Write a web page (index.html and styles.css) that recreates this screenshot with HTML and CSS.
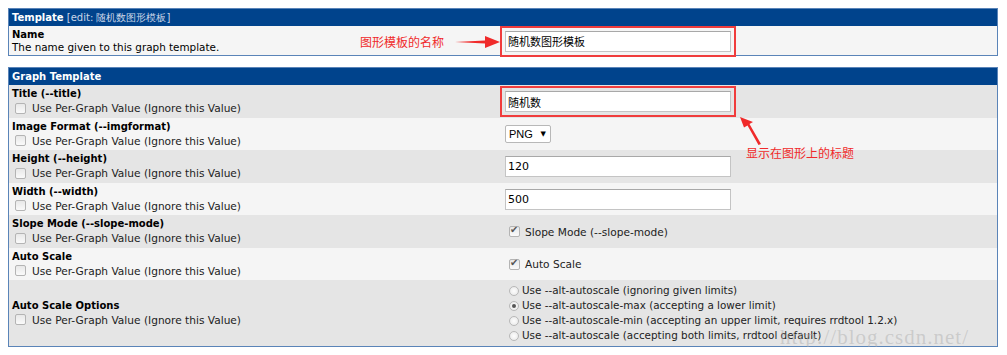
FILE: index.html
```html
<!DOCTYPE html>
<html lang="en">
  <head>
    <meta charset="UTF-8" />
    <title>Graph Templates</title>
    <link rel="stylesheet" href="styles.css">
  </head>
  <body>
    <div class="box">
      <div class="box-title"><b>Template</b> <span class="edit">[edit: 随机数图形模板]</span></div>
      <div class="row light">
        <div class="cell-left">
          <div class="label">Name</div>
          <div class="desc">The name given to this graph template.</div>
        </div>
        <div class="cell-right">
          <input type="text" class="text marked" value="随机数图形模板" />
        </div>
      </div>
      <div class="note note-name">图形模板的名称</div>
      <svg class="arrow arrow-name" width="46" height="14" viewBox="0 0 46 14">
        <path d="M0 7 L30 5.5 L30 1 L45 7 L30 13 L30 8.5 Z" fill="#f02a2a" />
      </svg>
    </div>

    <div class="box graph">
      <div class="box-title"><b>Graph Template</b></div>

      <div class="row dark">
        <div class="cell-left">
          <div class="label">Title (--title)</div>
          <label class="option"><input type="checkbox" class="check" /> Use Per-Graph Value (Ignore this Value)</label>
        </div>
        <div class="cell-right">
          <input type="text" class="text marked" value="随机数" />
        </div>
      </div>

      <div class="row light">
        <div class="cell-left">
          <div class="label">Image Format (--imgformat)</div>
          <label class="option"><input type="checkbox" class="check" /> Use Per-Graph Value (Ignore this Value)</label>
        </div>
        <div class="cell-right">
          <span class="select-wrap">
            <select class="select">
              <option>PNG</option>
              <option>GIF</option>
              <option>SVG</option>
            </select>
          </span>
        </div>
      </div>

      <div class="row dark">
        <div class="cell-left">
          <div class="label">Height (--height)</div>
          <label class="option"><input type="checkbox" class="check" /> Use Per-Graph Value (Ignore this Value)</label>
        </div>
        <div class="cell-right">
          <input type="text" class="text" value="120" />
        </div>
      </div>

      <div class="row light">
        <div class="cell-left">
          <div class="label">Width (--width)</div>
          <label class="option"><input type="checkbox" class="check" /> Use Per-Graph Value (Ignore this Value)</label>
        </div>
        <div class="cell-right">
          <input type="text" class="text" value="500" />
        </div>
      </div>

      <div class="row dark">
        <div class="cell-left">
          <div class="label">Slope Mode (--slope-mode)</div>
          <label class="option"><input type="checkbox" class="check" /> Use Per-Graph Value (Ignore this Value)</label>
        </div>
        <div class="cell-right">
          <label class="option right-option"><input type="checkbox" class="check" checked /> Slope Mode (--slope-mode)</label>
        </div>
      </div>

      <div class="row light">
        <div class="cell-left">
          <div class="label">Auto Scale</div>
          <label class="option"><input type="checkbox" class="check" /> Use Per-Graph Value (Ignore this Value)</label>
        </div>
        <div class="cell-right">
          <label class="option right-option"><input type="checkbox" class="check" checked /> Auto Scale</label>
        </div>
      </div>

      <div class="row dark tall">
        <div class="cell-left">
          <div class="label">Auto Scale Options</div>
          <label class="option"><input type="checkbox" class="check" /> Use Per-Graph Value (Ignore this Value)</label>
        </div>
        <div class="cell-right radios">
          <label class="radio-line"><input type="radio" name="autoscale" class="radio" /> Use --alt-autoscale (ignoring given limits)</label>
          <label class="radio-line"><input type="radio" name="autoscale" class="radio" checked /> Use --alt-autoscale-max (accepting a lower limit)</label>
          <label class="radio-line"><input type="radio" name="autoscale" class="radio" /> Use --alt-autoscale-min (accepting an upper limit, requires rrdtool 1.2.x)</label>
          <label class="radio-line"><input type="radio" name="autoscale" class="radio" /> Use --alt-autoscale (accepting both limits, rrdtool default)</label>
        </div>
      </div>

      <svg class="arrow arrow-title" width="24" height="30" viewBox="0 0 24 30">
        <path d="M1 1 L14 6 L10.5 8 L22 28 L19.5 29 L8.5 9.5 L5 11.5 Z" fill="#f02a2a" />
      </svg>
      <div class="note note-title">显示在图形上的标题</div>
    </div>

    <div class="watermark">http://blog.csdn.net/</div>
  </body>
</html>
```

FILE: styles.css
```css
body {
  margin: 8px;
  font-family: "DejaVu Sans", Verdana, sans-serif;
  font-size: 10.4px;
  color: #000;
  background: #fff;
  position: relative;
}

.box {
  position: relative;
  border: 1px solid #5a84b8;
  width: 988px;
}

.box.graph {
  margin-top: 11px;
}

.box-title {
  background-color: #00438c;
  color: #fff;
  height: 17px;
  line-height: 17px;
  padding-left: 3px;
  font-size: 10px;
}

.box-title .edit {
  color: #c9d6e8;
}

.row {
  display: grid;
  grid-template-columns: 496px 1fr;
  height: 32.5px;
}

.row.light {
  background-color: #f5f5f5;
}

.row.dark {
  background-color: #e5e5e5;
}

.box:first-child .row {
  height: 29px;
}

.row.tall {
  height: 66px;
}

.cell-left {
  padding: 2px 3px;
  display: flex;
  flex-direction: column;
  justify-content: center;
}

.cell-right {
  display: flex;
  align-items: center;
}

.label {
  font-weight: bold;
  font-size: 10px;
  line-height: 13px;
}

.desc {
  line-height: 13px;
}

.option {
  display: flex;
  align-items: center;
  line-height: 16px;
  color: #222;
  font-size: 10.6px;
}

.check {
  -webkit-appearance: none;
  appearance: none;
  width: 11px;
  height: 11px;
  margin: 0 6px 0 3px;
  border: 1px solid #b4b4b4;
  border-radius: 2px;
  background: linear-gradient(#e8e8e8, #fafafa);
  position: relative;
}

.right-option .check {
  margin: 0 5px 0 4px;
}

.check:checked::after {
  content: "✔";
  position: absolute;
  left: 0;
  top: -3px;
  font-size: 10px;
  color: #555;
}

.text {
  width: 220px;
  height: 19px;
  padding: 0 2px;
  margin: 0;
  border: 1px solid #c4c4c4;
  border-top-color: #a8a8a8;
  background: #fff;
  font-family: "DejaVu Sans", "Noto Sans CJK SC", sans-serif;
  font-size: 11px;
  color: #000;
}

.text.marked {
  outline: 2px solid #f03c3c;
  outline-offset: 3px;
}

.select-wrap {
  position: relative;
  display: inline-block;
}

.select-wrap::after {
  content: "▼";
  position: absolute;
  right: 5px;
  top: 5px;
  font-size: 7px;
  color: #000;
  pointer-events: none;
}

.select {
  -webkit-appearance: none;
  appearance: none;
  width: 46px;
  height: 18px;
  padding: 0 0 0 3px;
  border: 1px solid #b8b8b8;
  border-radius: 2px;
  background: #fff;
  font-family: "Liberation Sans", Arial, sans-serif;
  font-size: 11px;
  color: #000;
}

.radios {
  flex-direction: column;
  align-items: flex-start;
  justify-content: center;
}

.radio-line {
  display: flex;
  align-items: center;
  line-height: 15px;
  color: #222;
}

.radio {
  -webkit-appearance: none;
  appearance: none;
  width: 10px;
  height: 10px;
  margin: 0 3px 0 4px;
  border: 1px solid #b8b8b8;
  border-radius: 50%;
  background: radial-gradient(#fdfdfd, #e6e6e6);
  position: relative;
}

.radio:checked::after {
  content: "";
  position: absolute;
  left: 2px;
  top: 2px;
  width: 4px;
  height: 4px;
  border-radius: 50%;
  background: #555;
}

.note {
  position: absolute;
  color: #f02a2a;
  font-family: "Noto Sans CJK SC", sans-serif;
  font-size: 12px;
  line-height: 14px;
}

.note-name {
  left: 351px;
  top: 26px;
}

.arrow {
  position: absolute;
}

.arrow-name {
  left: 446px;
  top: 26px;
}

.arrow-title {
  left: 730px;
  top: 48px;
}

.note-title {
  left: 737px;
  top: 78px;
}

.watermark {
  position: absolute;
  left: 772px;
  top: 317px;
  font-family: "Liberation Serif", serif;
  font-size: 21px;
  letter-spacing: 1px;
  color: rgba(170, 170, 170, 0.45);
  pointer-events: none;
}
```
